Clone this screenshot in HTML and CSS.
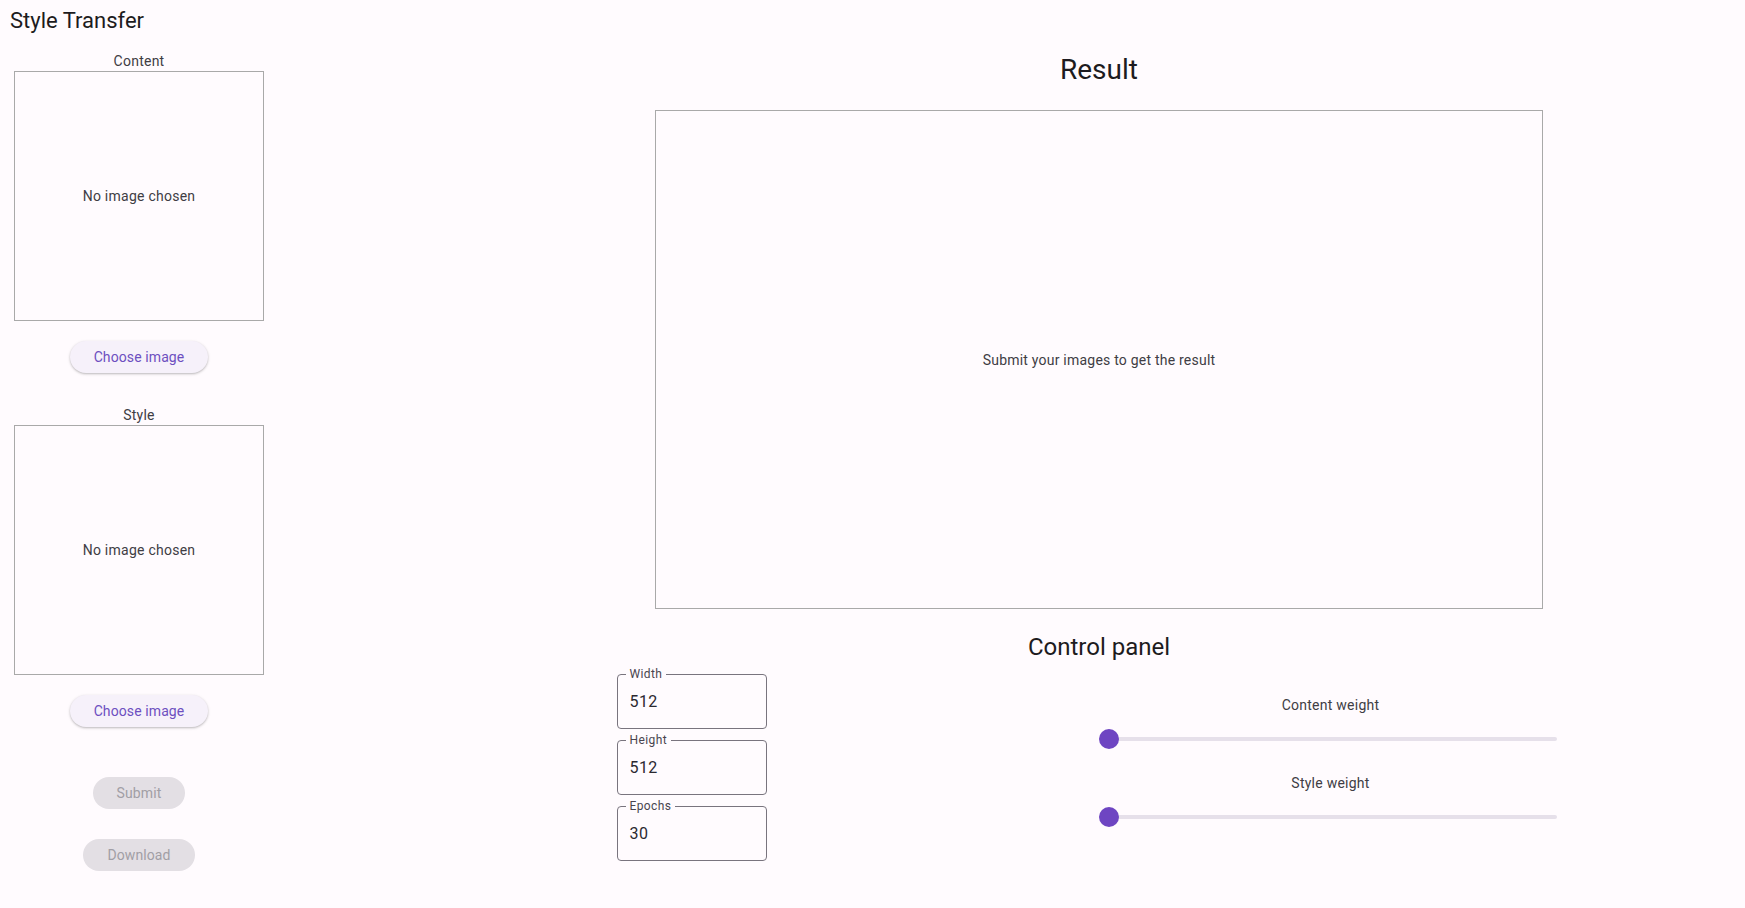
FILE: index.html
```html
<!DOCTYPE html>
<html lang="en">
<head>
<meta charset="utf-8">
<title>Style Transfer</title>
<link rel="stylesheet" href="styles.css">
</head>
<body>
<div class="app">
  <aside class="left">
    <h1 class="app-title">Style Transfer</h1>
    <div class="picker">
      <div class="picker-label">Content</div>
      <div class="image-box">No image chosen</div>
      <button class="btn btn-tonal">Choose image</button>
    </div>
    <div class="picker picker-second">
      <div class="picker-label">Style</div>
      <div class="image-box">No image chosen</div>
      <button class="btn btn-tonal">Choose image</button>
    </div>
    <button class="btn btn-disabled btn-submit" disabled>Submit</button>
    <button class="btn btn-disabled btn-download" disabled>Download</button>
  </aside>

  <main class="right">
    <h2 class="result-title">Result</h2>
    <div class="result-box">Submit your images to get the result</div>
    <h2 class="panel-title">Control panel</h2>
    <div class="controls">
      <div class="fields">
        <div class="field"><span class="field-label">Width</span><span class="field-value">512</span></div>
        <div class="field"><span class="field-label">Height</span><span class="field-value">512</span></div>
        <div class="field"><span class="field-label">Epochs</span><span class="field-value">30</span></div>
      </div>
      <div class="sliders">
        <div class="slider-group">
          <div class="slider-label">Content weight</div>
          <div class="slider"><div class="track"></div><div class="thumb"></div></div>
        </div>
        <div class="slider-group">
          <div class="slider-label">Style weight</div>
          <div class="slider"><div class="track"></div><div class="thumb"></div></div>
        </div>
      </div>
    </div>
  </main>
</div>
</body>
</html>
```

FILE: styles.css
```css
* { box-sizing: border-box; }

html, body {
  margin: 0;
  padding: 0;
  background: #fffbfe;
  color: #1d1b20;
  font-family: Roboto, "Noto Sans", sans-serif;
  width: 1745px;
  height: 908px;
  overflow: hidden;
}

.app {
  display: flex;
  align-items: flex-start;
}

.left {
  width: 278px;
  flex: none;
  display: flex;
  flex-direction: column;
  align-items: center;
}

.app-title {
  align-self: flex-start;
  margin: 0;
  padding: 7px 0 0 10px;
  font-size: 22px;
  line-height: 28px;
  font-weight: 400;
  color: #1d1b20;
}

.picker {
  display: flex;
  flex-direction: column;
  align-items: center;
  margin-top: 16px;
}

.picker-second {
  margin-top: 32px;
}

.picker-label {
  font-size: 14px;
  line-height: 20px;
  color: #403d44;
  letter-spacing: 0.25px;
}

.image-box {
  width: 250px;
  height: 250px;
  border: 1px solid #a9a9a9;
  display: flex;
  align-items: center;
  justify-content: center;
  font-size: 14px;
  color: #403d44;
  letter-spacing: 0.25px;
}

.btn {
  font-family: Roboto, "Noto Sans", sans-serif;
  font-size: 14px;
  font-weight: 400;
  letter-spacing: 0.1px;
  height: 32px;
  padding: 0 24px;
  border: none;
  border-radius: 16px;
  cursor: pointer;
}

.btn-tonal {
  margin-top: 20px;
  background: #f6f1fa;
  color: #6d4fc0;
  box-shadow: 0 1px 2px rgba(0, 0, 0, 0.2), 0 1px 3px 1px rgba(0, 0, 0, 0.06);
}

.btn-disabled {
  background: #e3dfe4;
  color: #a19ea5;
  cursor: default;
}

.btn-submit { margin-top: 50px; }
.btn-download { margin-top: 30px; }

.right {
  flex: 1;
  padding-left: 175px;
  display: flex;
  flex-direction: column;
  align-items: center;
}

.result-title {
  margin: 52px 0 0;
  font-size: 28px;
  line-height: 36px;
  font-weight: 400;
  color: #1d1b20;
}

.result-box {
  margin-top: 22px;
  width: 888px;
  height: 499px;
  border: 1px solid #a9a9a9;
  display: flex;
  align-items: center;
  justify-content: center;
  font-size: 14px;
  color: #403d44;
  letter-spacing: 0.22px;
}

.panel-title {
  margin: 22px 0 0;
  font-size: 24px;
  line-height: 32px;
  font-weight: 400;
  color: #1d1b20;
}

.controls {
  width: 960px;
  margin: 11px 5px 0 0;
  display: flex;
  justify-content: space-between;
  align-items: flex-start;
}

.fields {
  width: 150px;
  display: flex;
  flex-direction: column;
  gap: 11px;
}

.field {
  position: relative;
  height: 55px;
  border: 1px solid #79747e;
  border-radius: 4px;
  display: flex;
  align-items: center;
  padding-left: 12px;
}

.field-label {
  position: absolute;
  left: 8px;
  top: -9px;
  padding: 0 4px;
  background: #fffbfe;
  font-size: 12px;
  line-height: 16px;
  color: #49454f;
  letter-spacing: 0.4px;
}

.field-value {
  font-size: 16px;
  line-height: 24px;
  color: #2b2930;
  letter-spacing: 0.4px;
}

.sliders {
  width: 492px;
  display: flex;
  flex-direction: column;
  padding-top: 21px;
  gap: 10px;
}

.slider-group {
  display: flex;
  flex-direction: column;
  align-items: center;
}

.slider-label {
  font-size: 14px;
  line-height: 20px;
  color: #403d44;
  letter-spacing: 0.25px;
}

.slider {
  position: relative;
  width: 100%;
  height: 48px;
  display: flex;
  align-items: center;
  padding: 0 20px;
}

.track {
  flex: 1;
  height: 4px;
  border-radius: 2px;
  background: #e6e0ea;
}

.thumb {
  position: absolute;
  left: 14px;
  top: 14px;
  width: 20px;
  height: 20px;
  border-radius: 50%;
  background: #6e45c2;
}
```
